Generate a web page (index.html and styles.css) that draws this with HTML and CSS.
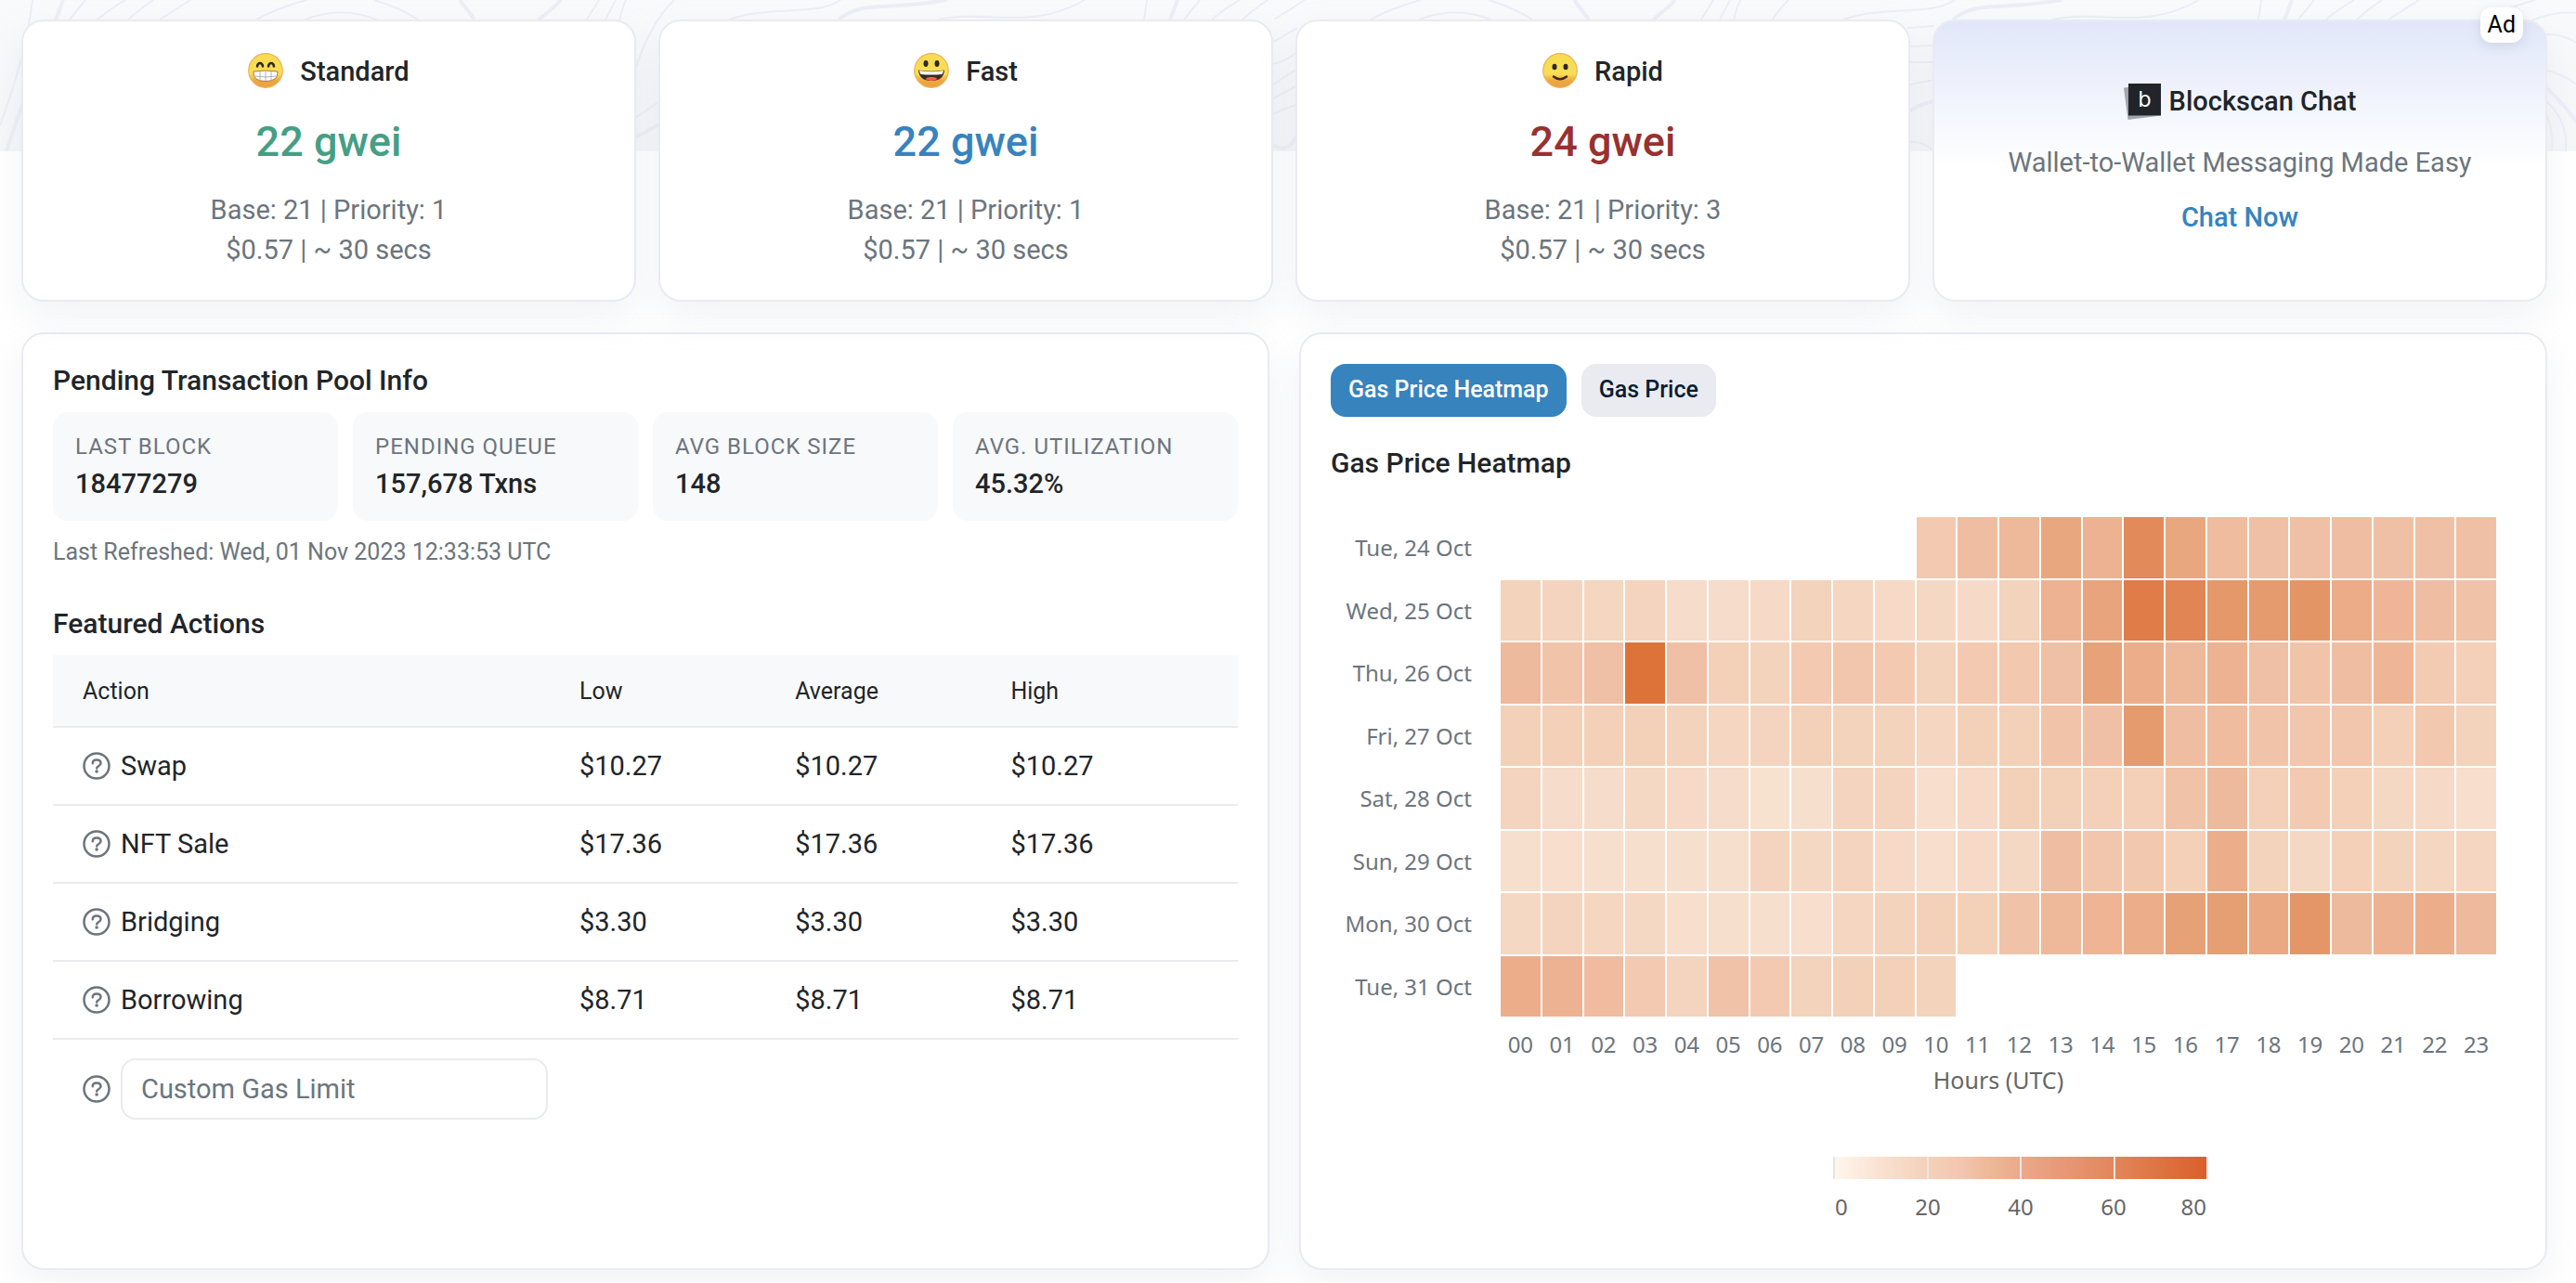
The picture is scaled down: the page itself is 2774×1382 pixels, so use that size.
FILE: index.html
```html
<!DOCTYPE html>
<html lang="en">
<head>
<meta charset="utf-8">
<meta name="viewport" content="width=device-width, initial-scale=1">
<title>Gas Tracker</title>
<link rel="stylesheet" href="styles.css">
</head>
<body>
<svg class="contours" aria-hidden="true">
  <defs>
    <linearGradient id="contour-bg" x1="0" y1="0" x2="0" y2="1">
      <stop offset="0" stop-color="#f9fafc"/><stop offset="1" stop-color="#f5f6f8"/>
    </linearGradient>
    <pattern id="contour-lines" width="1200" height="163" patternUnits="userSpaceOnUse">
      <g fill="none" stroke="#ebeef5" stroke-width="2">
        <path d="M35 0Q28 60 0 135M92 0L75 21M135 0Q118 10 105 21M165 0Q150 10 138 21M205 0Q190 10 172 21M330 0Q300 8 276 21M326 22Q367 5 408 22M403 0Q430 8 450 21M645 0L632 21M663 0L652 21M674 0Q668 12 666 30M726 0Q700 25 684 75M684 127L712 108M785 21C830 5 880 18 905 0M1010 21C1060 10 1110 34 1168 0"/>
        <path d="M168 47L197 30M168 69Q180 69 197 56M168 93L197 74M168 108L197 92M168 124L197 112M854 30L883 28M854 50L883 49M854 67L883 67M854 92Q870 88 883 86M854 154Q868 150 883 163M341 37Q360 36 376 47M341 75Q360 80 376 92M341 120Q350 140 348 163M341 108Q366 130 363 163"/>
        <path stroke-width="4" d="M68 0C50 50 30 90 7 163M495 0L511 21M604 0Q595 10 580 21M684 148L712 133M903 21C930 0 950 12 1020 0M168 154Q186 168 197 146M854 121Q868 112 883 109M341 94Q362 112 376 134"/>
      </g>
    </pattern>
  </defs>
  <rect width="100%" height="100%" fill="url(#contour-bg)"/>
  <rect width="100%" height="100%" fill="url(#contour-lines)"/>
</svg>

<svg class="sprite" aria-hidden="true">
  <defs>
    <linearGradient id="face" x1="0" y1="0" x2="0" y2="1">
      <stop offset="0" stop-color="#f7dc4f"/><stop offset=".6" stop-color="#f9dd58"/><stop offset=".8" stop-color="#eea83e"/><stop offset="1" stop-color="#ea9f42"/>
    </linearGradient>
    <symbol id="help" viewBox="0 0 30 30">
      <circle cx="15" cy="15" r="13.500" fill="none" stroke="currentColor" stroke-width="2.500"/>
      <path d="M10.800 12.200c0-2.200 1.600-3.600 4.300-3.600 2.600 0 4.400 1.400 4.400 3.600 0 2.900-4.300 3-4.300 5.200" fill="none" stroke="currentColor" stroke-width="2.500" stroke-linecap="round"/>
      <circle cx="15.100" cy="21" r="1.800" fill="currentColor"/>
    </symbol>
  </defs>
</svg>

<main class="page">
  <section class="cards" aria-label="Gas prices">
    <article class="card price">
      <h2 class="price-name">
        <svg class="emoji" viewBox="0 0 38 38" role="img" aria-label="Beaming face">
          <circle cx="19" cy="19" r="18.300" fill="url(#face)" stroke="#eab35c" stroke-width="1.200"/>
          <path d="M10 14.500q.5-3.500 3-3.500t3 3.500M22 14.500q.5-3.500 3-3.500t3 3.500" fill="none" stroke="#2c2722" stroke-width="2.500" stroke-linecap="round"/>
          <path d="M6 20q13-2 26 0 1 10.500-13 10.500T6 20z" fill="#fff" stroke="#b5792f" stroke-width="1"/>
          <path d="M7 25q12 2 24 0M19 19.500v10.500M13 19.500v10M25 19.500v10" fill="none" stroke="#aeb2b5" stroke-width="1"/>
        </svg>
        Standard
      </h2>
      <p class="gwei green">22 gwei</p>
      <p class="muted">Base: 21 | Priority: 1</p>
      <p class="muted">$0.57 | ~ 30 secs</p>
    </article>
    <article class="card price">
      <h2 class="price-name">
        <svg class="emoji" viewBox="0 0 38 38" role="img" aria-label="Grinning face">
          <circle cx="19" cy="19" r="18.300" fill="url(#face)" stroke="#eab35c" stroke-width="1.200"/>
          <ellipse cx="13" cy="11.500" rx="2.500" ry="3.400" fill="#2c2722"/><ellipse cx="25" cy="11.500" rx="2.500" ry="3.400" fill="#2c2722"/>
          <path d="M5 18.500q14 2.500 28 0-1 11.500-14 11.500T5 18.500z" fill="#3a2a22"/>
          <path d="M6 19q13 2.500 26 0-.5 2.500-1.500 4-11.500 1-23 0Q6.500 21.500 6 19z" fill="#fff"/>
          <path d="M12.500 28q2-2.500 6.500-2 4.500-.5 6.500 2-3 1.900-6.500 1.900t-6.500-1.900z" fill="#ee5f4e"/>
        </svg>
        Fast
      </h2>
      <p class="gwei blue">22 gwei</p>
      <p class="muted">Base: 21 | Priority: 1</p>
      <p class="muted">$0.57 | ~ 30 secs</p>
    </article>
    <article class="card price">
      <h2 class="price-name">
        <svg class="emoji" viewBox="0 0 38 38" role="img" aria-label="Slightly smiling face">
          <circle cx="19" cy="19" r="18.300" fill="url(#face)" stroke="#eab35c" stroke-width="1.200"/>
          <ellipse cx="13" cy="15" rx="2.500" ry="3.300" fill="#2c2722"/><ellipse cx="25" cy="15" rx="2.500" ry="3.300" fill="#2c2722"/>
          <path d="M12 25.500q7 5.500 14 0" fill="none" stroke="#3a2a22" stroke-width="2.500" stroke-linecap="round"/>
        </svg>
        Rapid
      </h2>
      <p class="gwei red">24 gwei</p>
      <p class="muted">Base: 21 | Priority: 3</p>
      <p class="muted">$0.57 | ~ 30 secs</p>
    </article>
    <article class="card promo">
      <span class="ad-tag">Ad</span>
      <h2 class="promo-name">
        <svg class="logo" viewBox="0 0 41 40" role="img" aria-label="Blockscan">
          <path d="M0 4.500L5 4v30l35 .5L4.500 39z" fill="#a3a5ab"/>
          <path d="M5 0h35v34.500H5z" fill="#212529"/>
          <text x="22.500" y="25" text-anchor="middle" fill="#fff" class="logo-letter">b</text>
        </svg>
        Blockscan Chat
      </h2>
      <p class="muted">Wallet-to-Wallet Messaging Made Easy</p>
      <a class="promo-link" href="#">Chat Now</a>
    </article>
  </section>

  <div class="panels">
    <section class="card panel">
      <h2 class="title">Pending Transaction Pool Info</h2>
      <dl class="stats">
        <div class="stat"><dt>LAST BLOCK</dt><dd>18477279</dd></div>
        <div class="stat"><dt>PENDING QUEUE</dt><dd>157,678 Txns</dd></div>
        <div class="stat"><dt>AVG BLOCK SIZE</dt><dd>148</dd></div>
        <div class="stat"><dt>AVG. UTILIZATION</dt><dd>45.32%</dd></div>
      </dl>
      <p class="refreshed">Last Refreshed: Wed, 01 Nov 2023 12:33:53 UTC</p>
      <h2 class="title">Featured Actions</h2>
      <table class="actions">
        <thead>
          <tr><th class="col-action">Action</th><th class="col-fee">Low</th><th class="col-fee">Average</th><th class="col-high">High</th></tr>
        </thead>
        <tbody>
          <tr><td><span class="action"><svg class="help"><use href="#help"/></svg>Swap</span></td><td>$10.27</td><td>$10.27</td><td>$10.27</td></tr>
          <tr><td><span class="action"><svg class="help"><use href="#help"/></svg>NFT Sale</span></td><td>$17.36</td><td>$17.36</td><td>$17.36</td></tr>
          <tr><td><span class="action"><svg class="help"><use href="#help"/></svg>Bridging</span></td><td>$3.30</td><td>$3.30</td><td>$3.30</td></tr>
          <tr><td><span class="action"><svg class="help"><use href="#help"/></svg>Borrowing</span></td><td>$8.71</td><td>$8.71</td><td>$8.71</td></tr>
          <tr class="custom"><td><label class="action"><svg class="help"><use href="#help"/></svg><input class="limit" type="text" placeholder="Custom Gas Limit" aria-label="Custom Gas Limit"></label></td><td></td><td></td><td></td></tr>
        </tbody>
      </table>
    </section>

    <section class="card panel">
      <div class="tabs">
        <button class="tab active" type="button">Gas Price Heatmap</button>
        <button class="tab" type="button">Gas Price</button>
      </div>
      <h2 class="title">Gas Price Heatmap</h2>
      <div class="chart">
        <div class="heatmap" id="heatmap"></div>
        <div class="hours" id="hours"></div>
        <p class="axis-title">Hours (UTC)</p>
      </div>
      <div class="legend">
        <div class="legend-bar"><i></i><i></i><i></i><i></i></div>
        <div class="legend-labels"><span>0</span><span>20</span><span>40</span><span>60</span><span>80</span></div>
      </div>
    </section>
  </div>
</main>
<script src="heatmap.js"></script>
</body>
</html>
```
FILE: styles.css
```css
* { box-sizing: border-box; }

body {
  margin: 0;
  background: #fff;
  color: #212529;
  font-family: Roboto, "Liberation Sans", sans-serif;
  font-size: 29px;
  line-height: 43px;
}

h2, p, dl, dd { margin: 0; }
h2 { font-size: 29px; font-weight: 500; }

.contours {
  position: absolute;
  top: 0;
  left: 0;
  width: 100%;
  height: 163px;
}

.sprite {
  position: absolute;
  width: 0;
  height: 0;
}

.page {
  position: relative;
  padding: 21px 31px 13px 23px;
}

.cards {
  display: grid;
  grid-template-columns: repeat(4, 1fr);
  gap: 24px;
}

.card {
  background: #fff;
  border: 2px solid #e9ebf0;
  border-radius: 24px;
  box-shadow: 0 16px 38px rgba(189, 197, 209, .2);
}

.price, .promo {
  position: relative;
  display: flex;
  flex-direction: column;
  align-items: center;
  padding: 33px 24px 32px;
}

.price-name {
  display: flex;
  align-items: center;
  gap: 18px;
  margin-bottom: 26px;
}

.emoji {
  width: 38px;
  height: 38px;
  margin-bottom: 4px;
}

.gwei {
  margin-bottom: 24px;
  font-size: 45px;
  font-weight: 500;
  line-height: 56px;
}

.green { color: #459f84; }
.blue { color: #3783be; }
.red { color: #983130; }
.muted { color: #6c757d; }

.promo {
  padding-top: 65px;
  background: linear-gradient(#e1e7fa, #fff 52%);
}

.promo-name {
  display: flex;
  align-items: center;
  gap: 8px;
  margin-bottom: 23px;
}

.logo { width: 41px; height: 40px; }
.logo-letter { font: 400 23px Inter, sans-serif; }

.promo-link {
  margin-top: 16px;
  color: #3783be;
  font-weight: 500;
  text-decoration: none;
}

.ad-tag {
  position: absolute;
  top: -15px;
  right: 24px;
  padding: 0 8px;
  border-radius: 12px;
  background: #fff;
  box-shadow: 0 4px 12px rgba(140, 152, 164, .25);
  color: #000;
  font-size: 25px;
  line-height: 38px;
}

.panels {
  display: grid;
  grid-template-columns: repeat(2, 1fr);
  gap: 32px;
  margin-top: 33px;
}

.panel {
  padding: 32px 32px 50px;
}

.title {
  font-size: 30px;
  line-height: 36px;
}

.stats {
  display: grid;
  grid-template-columns: repeat(4, 1fr);
  gap: 16px;
  margin: 16px 0;
}

.stat {
  padding: 18px 24px;
  border-radius: 16px;
  background: #f8f9fb;
}

.stat dt {
  color: #6c757d;
  font-size: 24px;
  line-height: 38px;
  letter-spacing: 1px;
}

.stat dd { font-weight: 500; }

.refreshed {
  margin-bottom: 41px;
  color: #6c757d;
  font-size: 25px;
  line-height: 36px;
}

.actions {
  width: 100%;
  margin-top: 16px;
  border-collapse: separate;
  border-spacing: 0;
  table-layout: fixed;
}

.actions th, .actions td {
  height: 84px;
  padding: 0 17px;
  border-bottom: 2px solid #e9ebf0;
  text-align: left;
}

.actions th {
  height: 78px;
  background: #f8f9fb;
  font-size: 25px;
  font-weight: 400;
}

.actions th:first-child, .actions td:first-child { padding-left: 32px; }
.col-action { width: 43.1%; }
.col-fee { width: 18.2%; }

.actions .custom td {
  height: auto;
  padding-top: 20px;
  border: 0;
}

.action {
  display: flex;
  align-items: center;
  gap: 11px;
}

.help {
  flex: none;
  width: 30px;
  height: 30px;
  color: #6c757d;
}

.limit {
  flex: 1;
  min-width: 0;
  height: 66px;
  padding: 0 20px;
  border: 2px solid #e9ebf0;
  border-radius: 16px;
  font: inherit;
}

.limit::placeholder { color: #6c757d; opacity: 1; }

.tabs {
  display: flex;
  gap: 16px;
  margin-bottom: 32px;
}

.tab {
  height: 57px;
  padding: 0 19px 2px;
  border: 0;
  border-radius: 16px;
  background: #eaebf0;
  color: #081d35;
  font: 500 25px Roboto, sans-serif;
}

.tab.active { background: #3783be; color: #fff; }

.chart {
  display: grid;
  padding: 40px 21px 0 14px;
  font-family: "Noto Sans", sans-serif;
  color: #6c757d;
  font-size: 24px;
}

.heatmap, .hours {
  display: grid;
  grid-template-columns: 138px 27px repeat(24, 1fr);
  column-gap: 2px;
}

.heatmap {
  grid-template-rows: repeat(8, 1fr);
  row-gap: 2px;
  height: 538px;
}

.day {
  align-self: center;
  text-align: right;
  white-space: nowrap;
}

.hour {
  margin-top: 8px;
  text-align: center;
}

.axis-title {
  margin-left: 169px;
  line-height: 34px;
  color: #666;
  font-size: 25px;
  text-align: center;
}

.legend {
  width: 404px;
  margin: 66px auto 0 541px;
  color: #666;
  font: 24px/32px "Noto Sans", sans-serif;
}

.legend-bar {
  display: grid;
  grid-template-columns: repeat(4, 1fr);
  height: 24px;
  border-left: 2px solid #e6e6e6;
  background: linear-gradient(90deg, #fff6ec, #f9e0d0 13%, #f4d0b9 25%, #f4c7b1 33%, #ecb896 42%, #eba98a 50%, #e8997a 60%, #e2865a 75%, #da5f29);
}

.legend-bar i { border-right: 2px solid #e6e6e6; }

.legend-labels {
  display: grid;
  grid-template-columns: 1fr 2fr 2fr 2fr 1fr;
  margin-top: 14px;
  padding: 0 2px;
  text-align: center;
}

.legend-labels span:first-child { text-align: left; }
.legend-labels span:last-child { text-align: right; }
```
FILE: heatmap.js
```js
// Average gas price in gwei per hour; null where there is no reading.
const gap = n => Array(n).fill(null);
const days = [
  ["Tue, 24 Oct", [...gap(10), 26,32,35,43,38,60,43,33,31,31,32,31,31,31]],
  ["Wed, 25 Oct", [20,19,18,19,15,15,16,20,18,16,17,16,20,38,44,66,62,52,50,54,41,36,32,30]],
  ["Thu, 26 Oct", [34,29,31,72,31,21,20,26,28,26,20,26,27,31,45,40,35,38,31,29,32,36,25,22]],
  ["Fri, 27 Oct", [21,22,22,21,20,18,19,21,20,20,18,21,21,29,31,50,32,33,29,28,28,22,27,20]],
  ["Sat, 28 Oct", [19,15,15,17,16,15,11,13,19,19,14,16,21,21,22,22,30,34,22,26,22,17,16,14]],
  ["Sun, 29 Oct", [13,14,13,13,13,13,19,17,19,16,14,16,17,32,28,27,22,40,20,17,22,20,18,18]],
  ["Mon, 30 Oct", [17,19,18,17,14,13,13,14,18,20,21,21,30,35,37,40,46,48,42,53,34,38,40,34]],
  ["Tue, 31 Oct", [40,38,33,26,19,30,26,20,21,21,20, ...gap(13)]]
];

const stops = [
  [0, [255,246,236]], [11, [247,226,208]], [14, [247,222,205]], [18, [244,214,193]],
  [21, [243,209,184]], [26, [243,202,177]], [31, [239,192,165]], [36, [238,182,151]],
  [40, [236,174,138]], [45, [231,162,121]], [52, [229,152,106]], [60, [226,138,90]],
  [66, [223,124,72]], [72, [222,115,58]], [80, [218,95,41]]
];

function colour(v) {
  const i = stops.findIndex(s => s[0] >= v);
  const [hi, b] = stops[i], [lo, a] = stops[Math.max(i - 1, 0)];
  const t = hi === lo ? 0 : (v - lo) / (hi - lo);
  return "rgb(" + a.map((c, k) => Math.round(c + (b[k] - c) * t)).join(",") + ")";
}

function add(parent, className, text) {
  const el = document.createElement("span");
  el.className = className;
  el.textContent = text || "";
  parent.append(el);
  return el;
}

const heatmap = document.getElementById("heatmap");
const hours = document.getElementById("hours");

for (const [day, values] of days) {
  add(heatmap, "day", day);
  add(heatmap, "spacer");
  for (const v of values) {
    const cell = add(heatmap, "cell");
    if (v !== null) cell.style.background = colour(v);
  }
}

add(hours, "spacer");
add(hours, "spacer");
for (let h = 0; h < 24; h++) add(hours, "hour", String(h).padStart(2, "0"));
```
